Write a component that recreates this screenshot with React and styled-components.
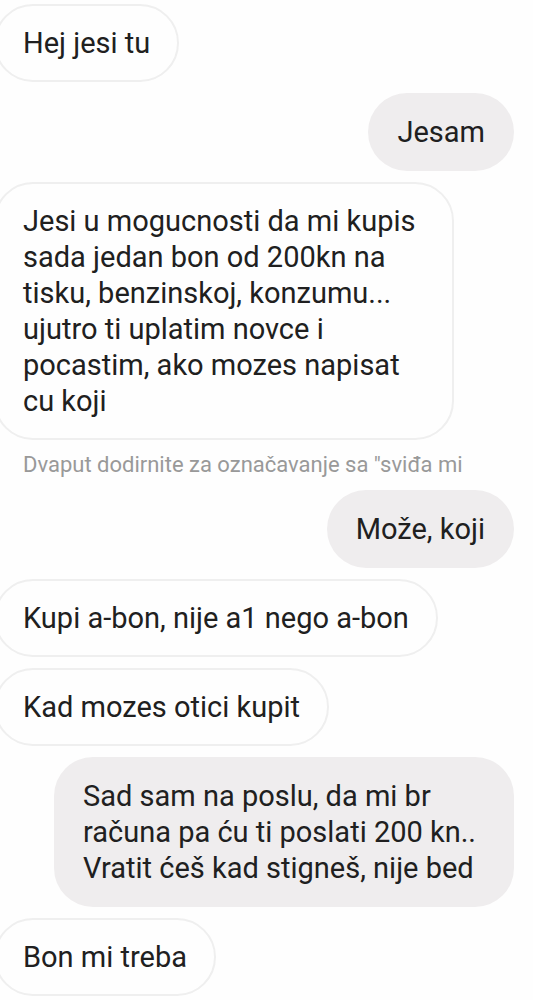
import React from "react";
import styled, { createGlobalStyle } from "styled-components";

const GlobalStyle = createGlobalStyle`
  * { box-sizing: border-box; }
  body {
    margin: 0;
    background: #fefefe;
    font-family: Roboto, "Noto Sans", sans-serif;
    color: #202020;
  }
`;

const Thread = styled.main`
  display: flex;
  flex-direction: column;
  gap: 11px;
  padding: 4px 19px 4px 0;
  overflow: hidden;
`;

const Bubble = styled.p`
  margin: 0 0 0 ${({ $sent }) => ($sent ? "0" : "-6px")};
  align-self: ${({ $sent }) => ($sent ? "flex-end" : "flex-start")};
  max-width: 460px;
  padding: ${({ $sent }) => ($sent ? "21px 29px" : "19px 27px")};
  border: ${({ $sent }) => ($sent ? "0" : "2px solid #efefef")};
  border-radius: 39px;
  background: ${({ $sent }) => ($sent ? "#efedee" : "#fefefe")};
  font-size: 29px;
  line-height: 36px;
`;

const Hint = styled.p`
  margin: 0;
  padding-left: 23px;
  color: #999999;
  font-size: 22px;
  line-height: 28px;
`;

export default function App() {
  return (
    <>
      <GlobalStyle />
      <Thread>
        <Bubble>Hej jesi tu</Bubble>
        <Bubble $sent>Jesam</Bubble>
        <Bubble>
          Jesi u mogucnosti da mi kupis sada jedan bon od 200kn na tisku,
          benzinskoj, konzumu... ujutro ti uplatim novce i pocastim, ako mozes
          napisat cu koji
        </Bubble>
        <Hint>Dvaput dodirnite za označavanje sa "sviđa mi</Hint>
        <Bubble $sent>Može, koji</Bubble>
        <Bubble>Kupi a-bon, nije a1 nego a-bon</Bubble>
        <Bubble>Kad mozes otici kupit</Bubble>
        <Bubble $sent>
          Sad sam na poslu, da mi br računa pa ću ti poslati 200 kn.. Vratit
          ćeš kad stigneš, nije bed
        </Bubble>
        <Bubble>Bon mi treba</Bubble>
      </Thread>
    </>
  );
}
